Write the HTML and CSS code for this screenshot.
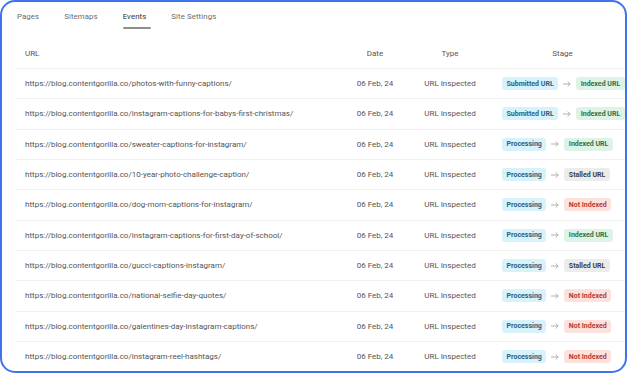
FILE: index.html
```html
<!DOCTYPE html>
<html>
<head>
<meta charset="utf-8">
<link rel="stylesheet" href="styles.css">
</head>
<body>
<div class="frame">
  <nav class="tabs">
    <span class="tab">Pages</span>
    <span class="tab">Sitemaps</span>
    <span class="tab active">Events</span>
    <span class="tab">Site Settings</span>
  </nav>
  <div class="table">
    <div class="row head">
      <div class="c-url">URL</div>
      <div class="c-date">Date</div>
      <div class="c-type">Type</div>
      <div class="c-stage-h">Stage</div>
    </div>
    <div class="row">
      <div class="c-url">https://blog.contentgorilla.co/photos-with-funny-captions/</div>
      <div class="c-date">06 Feb, 24</div>
      <div class="c-type">URL Inspected</div>
      <div class="c-stage"><span class="badge blue">Submitted URL</span><svg class="arrow" viewBox="0 0 8 6"><path d="M0 3H7.2M4.6 0.5L7.2 3L4.6 5.5"/></svg><span class="badge green">Indexed URL</span></div>
    </div>
    <div class="row">
      <div class="c-url">https://blog.contentgorilla.co/instagram-captions-for-babys-first-christmas/</div>
      <div class="c-date">06 Feb, 24</div>
      <div class="c-type">URL Inspected</div>
      <div class="c-stage"><span class="badge blue">Submitted URL</span><svg class="arrow" viewBox="0 0 8 6"><path d="M0 3H7.2M4.6 0.5L7.2 3L4.6 5.5"/></svg><span class="badge green">Indexed URL</span></div>
    </div>
    <div class="row">
      <div class="c-url">https://blog.contentgorilla.co/sweater-captions-for-instagram/</div>
      <div class="c-date">06 Feb, 24</div>
      <div class="c-type">URL Inspected</div>
      <div class="c-stage"><span class="badge blue">Processing</span><svg class="arrow" viewBox="0 0 8 6"><path d="M0 3H7.2M4.6 0.5L7.2 3L4.6 5.5"/></svg><span class="badge green">Indexed URL</span></div>
    </div>
    <div class="row">
      <div class="c-url">https://blog.contentgorilla.co/10-year-photo-challenge-caption/</div>
      <div class="c-date">06 Feb, 24</div>
      <div class="c-type">URL Inspected</div>
      <div class="c-stage"><span class="badge blue">Processing</span><svg class="arrow" viewBox="0 0 8 6"><path d="M0 3H7.2M4.6 0.5L7.2 3L4.6 5.5"/></svg><span class="badge gray">Stalled URL</span></div>
    </div>
    <div class="row">
      <div class="c-url">https://blog.contentgorilla.co/dog-mom-captions-for-instagram/</div>
      <div class="c-date">06 Feb, 24</div>
      <div class="c-type">URL Inspected</div>
      <div class="c-stage"><span class="badge blue">Processing</span><svg class="arrow" viewBox="0 0 8 6"><path d="M0 3H7.2M4.6 0.5L7.2 3L4.6 5.5"/></svg><span class="badge red">Not Indexed</span></div>
    </div>
    <div class="row">
      <div class="c-url">https://blog.contentgorilla.co/instagram-captions-for-first-day-of-school/</div>
      <div class="c-date">06 Feb, 24</div>
      <div class="c-type">URL Inspected</div>
      <div class="c-stage"><span class="badge blue">Processing</span><svg class="arrow" viewBox="0 0 8 6"><path d="M0 3H7.2M4.6 0.5L7.2 3L4.6 5.5"/></svg><span class="badge green">Indexed URL</span></div>
    </div>
    <div class="row">
      <div class="c-url">https://blog.contentgorilla.co/gucci-captions-instagram/</div>
      <div class="c-date">06 Feb, 24</div>
      <div class="c-type">URL Inspected</div>
      <div class="c-stage"><span class="badge blue">Processing</span><svg class="arrow" viewBox="0 0 8 6"><path d="M0 3H7.2M4.6 0.5L7.2 3L4.6 5.5"/></svg><span class="badge gray">Stalled URL</span></div>
    </div>
    <div class="row">
      <div class="c-url">https://blog.contentgorilla.co/national-selfie-day-quotes/</div>
      <div class="c-date">06 Feb, 24</div>
      <div class="c-type">URL Inspected</div>
      <div class="c-stage"><span class="badge blue">Processing</span><svg class="arrow" viewBox="0 0 8 6"><path d="M0 3H7.2M4.6 0.5L7.2 3L4.6 5.5"/></svg><span class="badge red">Not Indexed</span></div>
    </div>
    <div class="row">
      <div class="c-url">https://blog.contentgorilla.co/galentines-day-instagram-captions/</div>
      <div class="c-date">06 Feb, 24</div>
      <div class="c-type">URL Inspected</div>
      <div class="c-stage"><span class="badge blue">Processing</span><svg class="arrow" viewBox="0 0 8 6"><path d="M0 3H7.2M4.6 0.5L7.2 3L4.6 5.5"/></svg><span class="badge red">Not Indexed</span></div>
    </div>
    <div class="row">
      <div class="c-url">https://blog.contentgorilla.co/instagram-reel-hashtags/</div>
      <div class="c-date">06 Feb, 24</div>
      <div class="c-type">URL Inspected</div>
      <div class="c-stage"><span class="badge blue">Processing</span><svg class="arrow" viewBox="0 0 8 6"><path d="M0 3H7.2M4.6 0.5L7.2 3L4.6 5.5"/></svg><span class="badge red">Not Indexed</span></div>
    </div>
  </div>
</div>
</body>
</html>
```

FILE: styles.css
```css
* { box-sizing: border-box; }
html, body { margin: 0; padding: 0; background: #ffffff; }
body {
  font-family: "Roboto", "Noto Sans", sans-serif;
  color: #555;
}
.frame {
  width: 627px;
  height: 373px;
  border: 2px solid #3f74ee;
  border-radius: 15px;
  overflow: hidden;
  padding: 8px 0 0 14px;
  background: #fff;
}
.tabs {
  display: flex;
  gap: 25px;
  padding-left: 1px;
}
.tab {
  position: relative;
  font-size: 7.8px;
  line-height: 14px;
  padding-bottom: 5px;
  color: #6b6b6b;
  letter-spacing: 0.1px;
}
.tab.active { color: #333; }
.tab.active::after {
  content: "";
  position: absolute;
  left: 0;
  right: -5px;
  bottom: 0;
  height: 2px;
  background: #8e8e8e;
  border-radius: 1px;
}
.table {
  margin-top: 10px;
  width: 624px;
}
.row {
  display: grid;
  grid-template-columns: 319px 80px 70px 155px;
  align-items: center;
  height: 30.33px;
  border-bottom: 1px solid #efefef;
  font-size: 8px;
  color: #555;
}
.row.head { height: 30px; }
.c-url { padding-left: 9px; white-space: nowrap; }
.c-date, .c-type, .c-stage-h { text-align: center; }
.c-stage {
  display: flex;
  align-items: center;
  gap: 5px;
  padding-left: 17px;
}
.badge {
  display: inline-flex;
  align-items: center;
  height: 13px;
  padding: 0 4.5px;
  border-radius: 3px;
  font-size: 7px;
  font-weight: 700;
  white-space: nowrap;
}
.badge.blue { background: #d7f2fb; color: #2d5f7d; }
.badge.green { background: #ddf3e6; color: #2f7248; }
.badge.gray { background: #ececec; color: #3d3d3d; }
.badge.red { background: #fde1dd; color: #b73a30; }
.arrow {
  width: 8px;
  height: 6px;
  fill: none;
  stroke: #a8a8a8;
  stroke-width: 0.9;
}
```
